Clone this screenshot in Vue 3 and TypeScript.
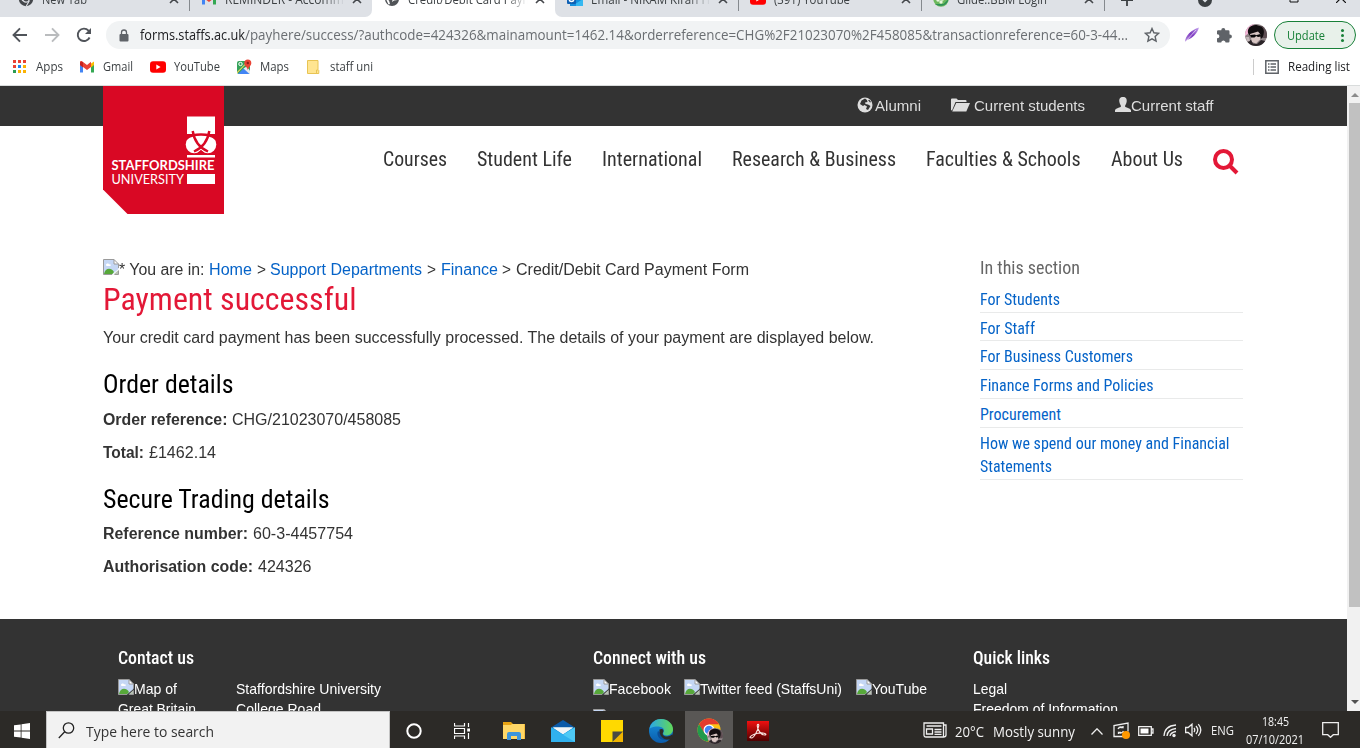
<script setup lang="ts">
interface Tab { title: string; width: number; icon: string; active?: boolean; divider?: boolean; faded?: boolean }
interface Label { text: string; width: number }

const tabs: Tab[] = [
  { title: 'New Tab', width: 45, icon: 'i-chromegray', divider: true },
  { title: 'REMINDER - Accommo', width: 126, icon: 'i-gmail', faded: true },
  { title: 'Credit/Debit Card Paym', width: 125, icon: 'i-globe', active: true, faded: true },
  { title: 'Email - NIKAM Kiran H', width: 119, icon: 'i-outlook', divider: true, faded: true },
  { title: '(391) YouTube', width: 76, icon: 'i-youtube', divider: true },
  { title: 'Glide::BBM Login', width: 90, icon: 'i-glide', divider: true },
]

const bookmarks: (Label & { icon: string; cls: string })[] = [
  { text: 'Apps', width: 27, icon: 'i-apps', cls: 'b-apps' },
  { text: 'Gmail', width: 30, icon: 'i-gmail', cls: 'b-gmail' },
  { text: 'YouTube', width: 46, icon: 'i-youtube', cls: 'b-youtube' },
  { text: 'Maps', width: 29, icon: 'i-maps', cls: 'b-maps' },
  { text: 'staff uni', width: 43, icon: 'i-folder', cls: 'b-folder' },
]

const nav: Label[] = [
  { text: 'Courses', width: 64 },
  { text: 'Student Life', width: 95 },
  { text: 'International', width: 100 },
  { text: 'Research & Business', width: 164 },
  { text: 'Faculties & Schools', width: 154.5 },
  { text: 'About Us', width: 72 },
]

const section: Label[][] = [
  [{ text: 'For Students', width: 80 }],
  [{ text: 'For Staff', width: 55 }],
  [{ text: 'For Business Customers', width: 153 }],
  [{ text: 'Finance Forms and Policies', width: 173.5 }],
  [{ text: 'Procurement', width: 81 }],
  [{ text: 'How we spend our money and Financial', width: 249.5 }, { text: 'Statements', width: 72 }],
]

const social: Label[] = [
  { text: 'Facebook', width: 62 },
  { text: 'Twitter feed (StaffsUni)', width: 142 },
  { text: 'YouTube', width: 55 },
]

// Condenses or widens a text run so that it occupies the given width in px.
const vFit = {
  mounted(el: HTMLElement, binding: { value: number }) {
    const natural = el.getBoundingClientRect().width
    if (!natural) return
    el.style.transform = `scaleX(${binding.value / natural})`
    el.style.marginRight = `${binding.value - natural}px`
  },
}
</script>

<template>
  <div class="screen">
    <svg class="defs" width="0" height="0">
      <defs>
        <linearGradient id="edgeA" x1="0" y1="0" x2="1" y2="0"><stop offset="0" stop-color="#2aa7e8" /><stop offset="1" stop-color="#62d957" /></linearGradient>
        <linearGradient id="edgeB" x1="0" y1="0" x2="0" y2="1"><stop offset="0" stop-color="#1793de" /><stop offset="1" stop-color="#0b5cab" /></linearGradient>
        <linearGradient id="pdf" x1="0" y1="0" x2="0" y2="1"><stop offset="0" stop-color="#f01010" /><stop offset="1" stop-color="#4e0000" /></linearGradient>
        <linearGradient id="quill" x1="0" y1="1" x2="1" y2="0"><stop offset="0" stop-color="#b48be0" /><stop offset=".5" stop-color="#7d3bc0" /><stop offset="1" stop-color="#c9aaf0" /></linearGradient>
        <clipPath id="round"><circle cx="11" cy="11" r="11" /></clipPath>
      </defs>
      <symbol id="i-broken" viewBox="0 0 16 16">
        <path d="M.5.5H11l4.500 4.500v5L9 15.500H.5z" fill="#c5d7f5" />
        <path d="M3 6c0-2 3-2 3-.5C8 4.500 8.500 7 7 7H3.500z" fill="#fff" />
        <path d="M1 15c1-6 7-7 10-2l-2 2.500H1z" fill="#57a83a" />
        <path d="M15.500 11v4.500h-5z" fill="#b7c3b4" />
        <path d="M11 .5v4.500h4.500z" fill="#fff" />
        <path d="M9 15.500H.5V.5H11l4.500 4.500v4M11 .5v4.500h4.500M15.500 11.500v4h-4" fill="none" stroke="#9a9a9a" />
      </symbol>
      <symbol id="i-chromegray" viewBox="0 0 16 16"><circle cx="8" cy="8" r="7.200" fill="#44474b" /><circle cx="8" cy="8" r="3.200" fill="#44474b" stroke="#dee1e6" stroke-width="1.200" /><path d="M8 4.300h6.500M4.800 10 1.500 4.500M11.200 10 8 15.500" stroke="#dee1e6" stroke-width="1.100" /></symbol>
      <symbol id="i-gmail" viewBox="0 0 16 16"><path d="M1 3v10.500h3V7z" fill="#4285f4" /><path d="M15 3v10.500h-3V7z" fill="#34a853" /><path d="M12 4.500 15 2.600V6l-3 2.500z" fill="#fbbc04" /><path d="M1 6V3.200C1 2 2.500 1.800 3.400 2.500L8 6l4-3.200v5.200l-4 3-4-3V8.500z" fill="#ea4335" /><path d="M1 3.200V6l3 2.300V3z" fill="#c5221f" /></symbol>
      <symbol id="i-youtube" viewBox="0 0 16 16"><rect y="2.200" width="16" height="11.600" rx="3" fill="#f00" /><path d="M6.300 5.500v5L10.600 8z" fill="#fff" /></symbol>
      <symbol id="i-globe" viewBox="0 0 16 16"><circle cx="8" cy="8" r="7" fill="#505357" /><path d="M7 1.500 4.500 4.800 7 6.200 5.500 8.500 8.500 9l-.5 2 2-1.500 3.500-.5-1-2.500L9.500 6l2-2.500M2 8l3 1.500 1 3.500-1.500.5z" fill="#fff" /></symbol>
      <symbol id="i-outlook" viewBox="0 0 16 16"><path d="M4 1h11v8H4z" fill="#28a8ea" /><path d="M3 8h13v7H3z" fill="#1490df" /><path d="m16 8-7 4.500V15h7z" fill="#50d9ff" opacity=".55" /><rect y="3.500" width="9" height="9.500" rx="1" fill="#0f61b4" /><circle cx="4.500" cy="8.200" r="2.300" fill="none" stroke="#fff" stroke-width="1.400" /></symbol>
      <symbol id="i-glide" viewBox="0 0 16 16"><circle cx="8" cy="8" r="7.700" fill="#6cb85c" /><path d="M2 13c4 3 12 3 13.500-5l-5 5z" fill="#2e9057" /><g fill="#e9f5df"><circle cx="5" cy="9" r="1.700" /><circle cx="8" cy="11" r="1.700" /><circle cx="9.500" cy="8" r="1.700" /><circle cx="6.500" cy="6" r="1.700" /></g></symbol>
      <symbol id="i-apps" viewBox="0 0 14 14"><path d="M0 0h3v3H0zM5 0h3v3H5zM10 0h3v3h-3zM0 5h3v3H0z" fill="#ea4335" /><path d="M5 5h3v3H5z" fill="#1a83f0" /><path d="M10 5h3v3h-3zM5 10h3v3H5zM10 10h3v3h-3z" fill="#fbb304" /><path d="M0 10h3v3H0z" fill="#2b9c52" /></symbol>
      <symbol id="i-maps" viewBox="0 0 16 16"><rect x="1" y="2" width="13" height="13" rx="2" fill="#35a35a" /><path d="M2 15 8 9l6 6z" fill="#4285f4" /><path d="m1 13 10-10h1L1 14.500z" fill="#fdd663" /><path d="m7.500 9.500 6 5.500.5-.5v-3l-3.500-4z" fill="#e8eaed" /><circle cx="4.500" cy="5" r="1.700" fill="none" stroke="#fff" /><path d="M8.300 4a3.500 3.500 0 0 1 7 0c0 2.500-2.500 3.500-3.500 7-1-3.500-3.500-4.500-3.500-7z" fill="#ea4335" /><circle cx="11.800" cy="4" r="1.200" fill="#8c1d18" /></symbol>
      <symbol id="i-folder" viewBox="0 0 16 16"><path d="M1.500 1.500h10.500v9l.8 1v3H1.500z" fill="#ffe591" stroke="#e8c453" /><path d="M10.500 14V11h1.500" fill="none" stroke="#e8c453" /></symbol>
      <symbol id="i-face" viewBox="0 0 22 22"><g clip-path="url(#round)"><path fill="#8e8386" d="M0 0h22v22H0z" /><path d="M0 0h9L4 9 0 12z" fill="#f2b6d6" /><path d="M16 2h6v12h-6z" fill="#5d4d52" /><path d="M3 9C2 3 8 0 13 1.500c6 .5 7 6 5 11L16 15l-2-6-8 1-1 2z" fill="#120e10" /><path d="m5 10 8-2.500 2.500 3-.5 5-4 4-4-1.500z" fill="#d8c6c3" /><path d="m5 11 5-.5 1 .7 4.500-1.200.5 2.500-3 .5-1.800-1-1.700 1.500H6z" fill="#070607" /><path d="m0 22 2-5 4-1 2 3.500 4 .5 4-4 4 1 1 5z" fill="#2b2528" /><path d="M1 13h3l1 4-3 1z" fill="#c3b7ba" /></g></symbol>
    </svg>

    <header class="browser">
      <div class="tabstrip">
        <div v-for="t in tabs" :key="t.title" class="tab" :class="{ active: t.active, divider: t.divider }">
          <svg class="favicon"><use :href="'#' + t.icon" /></svg>
          <div class="tabtitle" :class="{ faded: t.faded }"><span v-fit="t.width" class="fit">{{ t.title }}</span></div>
          <svg class="close" viewBox="0 0 10 10"><path d="m1 1 8 8M9 1 1 9" /></svg>
        </div>
        <svg class="plus" viewBox="0 0 14 14"><path d="M7 1v12M1 7h12" /></svg>
        <svg class="media" viewBox="0 0 14 14"><circle cx="7" cy="7" r="7" /><path d="M4.500 7h5L7 9.500z" fill="#dee1e6" /></svg>
        <svg class="maxi" viewBox="0 0 10 10"><path d="M1 1h8v8H1z" /></svg>
        <svg class="quit" viewBox="0 0 10 10"><path d="m0 0 10 10M10 0 0 10" /></svg>
      </div>

      <div class="toolbar">
        <svg class="tool back" viewBox="0 0 16 16"><path d="M15 8H2M8 1.300 1.500 8 8 14.700" /></svg>
        <svg class="tool forward" viewBox="0 0 16 16"><path d="M1 8h13M8 1.300 14.500 8 8 14.700" /></svg>
        <svg class="tool reload" viewBox="0 0 16 16"><path d="M13.600 10.500A6.200 6.200 0 1 1 12.500 3.600l1 1" /><path class="solid" d="M15 1v6H9z" /></svg>
        <div class="omnibox">
          <svg class="lock" viewBox="0 0 10 13"><path d="M2.500 5.500V3.500a2.500 2.500 0 0 1 5 0v2" fill="none" stroke="#5f6368" stroke-width="1.300" /><rect x=".5" y="5" width="9" height="7.500" rx="1" fill="#5f6368" /></svg>
          <span v-fit="105" class="fit host">forms.staffs.ac.uk</span><span v-fit="883" class="fit path">/payhere/success/?authcode=424326&amp;mainamount=1462.14&amp;orderreference=CHG%2F21023070%2F458085&amp;transactionreference=60-3-44...</span>
          <svg class="star" viewBox="0 0 16 16"><path d="m8 1.500 1.900 4.300 4.700.5-3.500 3.200 1 4.700L8 11.800l-4.100 2.400 1-4.700L1.400 6.300l4.700-.5z" /></svg>
        </div>
        <svg class="quill" viewBox="0 0 16 16"><path d="M1 15C1.500 8.500 7 3 15 .5 13.500 6 9 11 3.500 12.800z" fill="url(#quill)" /><path d="M1 15 12 3" stroke="#f3eafa" stroke-width=".7" /></svg>
        <svg class="puzzle" viewBox="0 0 16 16"><path d="M1 4.500q0-1.200 1.200-1.200h3.100V3a2 2 0 0 1 4 0v.3h3q1.200 0 1.200 1.200v3h.4a2 2 0 0 1 0 4h-.4v2.800q0 1.200-1.200 1.200H9.500V15a2.200 2.200 0 0 0-4.200 0v.5H2.200Q1 15.500 1 14.300v-3h.4a2 2 0 0 0 0-4H1z" fill="#5f6368" /></svg>
        <svg class="avatar"><use href="#i-face" /></svg>
        <div class="update"><span v-fit="38" class="fit">Update</span><i class="dots" /></div>
      </div>

      <div class="bookmarks">
        <div v-for="b in bookmarks" :key="b.text" class="bookmark" :class="b.cls">
          <svg><use :href="'#' + b.icon" /></svg><span v-fit="b.width" class="fit">{{ b.text }}</span>
        </div>
        <div class="reading">
          <svg viewBox="0 0 14 14"><path d="M.8.8h12.400v12.400H.8z" fill="none" stroke="#5f6368" stroke-width="1.500" /><path d="M3 4h1.500M5.500 4H11M3 7h1.500M5.500 7H11M3 10h1.500M5.500 10H11" stroke="#5f6368" stroke-width="1.500" /></svg>
          <span v-fit="62" class="fit">Reading list</span>
        </div>
      </div>
    </header>

    <div class="viewport">
      <div class="page">
        <div class="topbar">
          <a class="alumni"><svg viewBox="0 0 16 16"><circle cx="8" cy="8" r="7.500" fill="#ddd" /><path d="M8 1.500 4.500 3.500 3 7l3 2 1.500-1L10 9.500 9 12l2 1 2.500-4L11 7.500 8.500 7 8 5.500l2.500-.5L10 3zM11 3l2 2.500 1-.5-1.500-2z" fill="#333" /></svg><span v-fit="46" class="fit">Alumni</span></a>
          <a class="students"><svg viewBox="0 0 19 14"><path d="M0 12V1.500Q0 .5 1 .5h4.500L7 2h7.500q1 0 1 1v1H4.500L1 12.500z" fill="#ddd" /><path d="M5.200 5H19l-3.700 8.500H1.200z" fill="#ddd" /></svg><span v-fit="111" class="fit">Current students</span></a>
          <a class="staff"><svg viewBox="0 0 16 15"><path d="M8 0c3 0 4 2 3.700 4.500C11.400 7.500 10 8 10 9.200c0 1.500 6 1.800 6 4.300V15H0v-1.500c0-2.500 6-2.800 6-4.300C6 8 4.600 7.500 4.300 4.500 4 2 5 0 8 0z" fill="#ddd" /></svg><span v-fit="82.500" class="fit">Current staff</span></a>
        </div>
        <nav class="nav">
          <a v-for="n in nav" :key="n.text"><span v-fit="n.width" class="fit">{{ n.text }}</span></a>
          <svg class="search" viewBox="0 0 26 26"><circle cx="10.500" cy="10.500" r="8.500" /><path d="m17 17 7 7" /></svg>
        </nav>

        <svg class="logo" viewBox="0 0 121 128">
          <path d="M0 0h121v128H24.500L0 103.500z" fill="#d90824" />
          <path d="M84 30.500h28V48H84zM84 69h28v2.500H84zM84 88h28v10H84z" fill="#fff" />
          <ellipse cx="91.300" cy="58.500" rx="8.600" ry="8.700" fill="#fff" />
          <ellipse cx="104.700" cy="58.500" rx="8.600" ry="8.700" fill="#fff" />
          <path d="M90 49h16v13H90z" fill="#fff" />
          <path d="M83.500 52.500Q88 48.500 98 48.500T112.500 52.500" fill="none" stroke="#d90824" stroke-width="2.400" />
          <path d="M89.700 45C91 54 95 61 105 65.500M106.300 45C105 54 101 61 91 65.500" fill="none" stroke="#d90824" stroke-width="2.400" />
          <path d="m93 68 5-4 5 4z" fill="#d90824" />
          <g fill="#fff" font-family="Lato, sans-serif" font-size="13"><text x="8.500" y="83.700" font-weight="700" textLength="103" lengthAdjust="spacingAndGlyphs">STAFFORDSHIRE</text><text x="8.500" y="97.700" textLength="72.500" lengthAdjust="spacingAndGlyphs">UNIVERSITY</text></g>
        </svg>

        <div class="content">
          <main>
            <div class="crumbs"><svg class="broken"><use href="#i-broken" /></svg><span v-fit="85.500" class="fit">* You are in:</span><a v-fit="43" class="fit">Home</a><span v-fit="9" class="fit">&gt;</span><a v-fit="152" class="fit">Support Departments</a><span v-fit="9" class="fit">&gt;</span><a v-fit="57" class="fit">Finance</a><span v-fit="9" class="fit">&gt;</span><span v-fit="233" class="fit">Credit/Debit Card Payment Form</span></div>
            <h1><span v-fit="253.500" class="fit">Payment successful</span></h1>
            <p class="intro"><span v-fit="771" class="fit">Your credit card payment has been successfully processed. The details of your payment are displayed below.</span></p>
            <h2><span v-fit="130.500" class="fit">Order details</span></h2>
            <p class="first"><b v-fit="124.500" class="fit">Order reference:</b><span v-fit="169" class="fit value">CHG/21023070/458085</span></p>
            <p><b v-fit="41" class="fit">Total:</b><span v-fit="67" class="fit value">£1462.14</span></p>
            <h2><span v-fit="226.500" class="fit">Secure Trading details</span></h2>
            <p class="second"><b v-fit="145" class="fit">Reference number:</b><span v-fit="100" class="fit value">60-3-4457754</span></p>
            <p><b v-fit="150" class="fit">Authorisation code:</b><span v-fit="53.500" class="fit value">424326</span></p>
          </main>
          <aside>
            <h3><span v-fit="100" class="fit">In this section</span></h3>
            <ul>
              <li v-for="(item, i) in section" :key="i"><div v-for="l in item" :key="l.text"><a v-fit="l.width" class="fit">{{ l.text }}</a></div></li>
            </ul>
          </aside>
        </div>

        <footer>
          <section class="contact">
            <h4><span v-fit="76" class="fit">Contact us</span></h4>
            <div class="columns">
              <div class="map"><div class="line"><svg class="broken"><use href="#i-broken" /></svg><span v-fit="43" class="fit">Map of</span></div><div class="line"><span v-fit="78" class="fit">Great Britain</span></div></div>
              <div><div class="line"><span v-fit="145" class="fit">Staffordshire University</span></div><div class="line"><span v-fit="85" class="fit">College Road</span></div></div>
            </div>
          </section>
          <section class="connect">
            <h4><span v-fit="113" class="fit">Connect with us</span></h4>
            <div class="line social"><a v-for="s in social" :key="s.text"><svg class="broken"><use href="#i-broken" /></svg><span v-fit="s.width" class="fit">{{ s.text }}</span></a></div>
            <div class="line next"><svg class="broken"><use href="#i-broken" /></svg></div>
          </section>
          <section class="quick">
            <h4><span v-fit="77" class="fit">Quick links</span></h4>
            <div class="line"><span v-fit="34" class="fit">Legal</span></div>
            <div class="line"><span v-fit="145" class="fit">Freedom of Information</span></div>
          </section>
        </footer>
      </div>
      <div class="scrollbar"><i class="up" /><div class="thumb" /><i class="down" /></div>
    </div>

    <div class="taskbar">
      <div class="start"><svg viewBox="0 0 16 16"><path d="M0 2.300 6.700 1.400v6.200H0zM7.500 1.300 16 0v7.600H7.500zM0 8.400h6.700v6.200L0 13.700zM7.500 8.400H16V16l-8.500-1.300z" fill="#fff" /></svg></div>
      <div class="searchbox"><svg viewBox="0 0 17 17"><circle cx="10.500" cy="6" r="5.200" /><path d="M6.700 9.800 .8 16" /></svg><span v-fit="128" class="fit">Type here to search</span></div>
      <div class="apps">
        <div class="app"><svg width="16" height="16" viewBox="0 0 16 16"><circle cx="8" cy="8" r="6.700" fill="none" stroke="#fff" stroke-width="2" /></svg></div>
        <div class="app"><svg width="16" height="16" viewBox="0 0 16 16"><path d="M.5 0v3h10V0M.5 16v-3h10v3M.5 5.500h10v5H.5zM14.500 0v4M14.500 10v6" fill="none" stroke="#fff" stroke-width="1.200" /><path d="M13.200 5.500H16v3h-2.800z" fill="#fff" /></svg></div>
        <div class="app explorer"><svg width="22" height="18" viewBox="0 0 22 18"><path d="M0 0h8l2 2h12v15H0z" fill="#e8a313" /><path d="M0 3h8l1-1h12.500v15H0z" fill="#ffd767" /><path d="M4 18v-6q0-2 2-2h10q2 0 2 2v6h-4v-4H8v4z" fill="#3d95db" /></svg></div>
        <div class="app"><svg width="24" height="22" viewBox="0 0 24 22"><path d="M0 7.500 12 0l12 7.500z" fill="#0b5aa8" /><path d="M0 7.500h24V22H0z" fill="#1e9be2" /><path d="M2 7.500h20L12 14z" fill="#f2f5f7" /><path d="m0 7.500 12 7.200L24 7.500V22H0z" fill="#30b1ee" /><path d="M2 7.500h20l-10 6.700z" fill="#f2f5f7" /><path d="m12 14.700 12-7.200V22z" fill="#4ec9f5" /></svg></div>
        <div class="app"><svg width="22" height="22" viewBox="0 0 22 22"><path d="M0 0h22v22H0z" fill="#ffd900" /><path d="M12 22 22 11v11z" fill="#f0b400" /><path d="M11.500 11.500H22L11.500 22z" fill="#4a4a43" /></svg></div>
        <div class="app"><svg width="24" height="24" viewBox="0 0 24 24"><circle cx="12" cy="12" r="12" fill="url(#edgeB)" /><path d="M.3 10C2 3 7 0 12 0c7 0 12 5 12 10 0 4-3 6.500-6.500 6.500-3 0-4-1.500-3-3 2-4-2-6-6-6C4 7.500 1 9 .3 10z" fill="url(#edgeA)" /><path d="M9 12c-2 4 1 9 7 9 3 0 4-.8 6-2l1-2c-4 3-9 1.500-9.500-1.500z" fill="#0b4e98" /><path d="M10.500 10.500c3-1.500 5 .5 3.500 3-1 2 .5 4 4 4 2 0 3.500-.8 5-2l.8 1.500L22 20c-5 2-12-1-11.500-9.500z" fill="#2c2a27" /></svg></div>
        <div class="app current"><svg width="28" height="26" viewBox="0 0 28 26"><circle cx="12" cy="12" r="11.500" fill="#fbc116" /><path d="M2 6.200A11.500 11.500 0 0 1 22 6.200H12L7 15z" fill="#e33b2e" /><path d="M2 6.200 7.500 15l6 2.500-3 6A11.500 11.500 0 0 1 2 6.200z" fill="#229a4c" /><circle cx="12" cy="12" r="5.500" fill="#fff" /><circle cx="12" cy="12" r="4.300" fill="#4285f4" /><use href="#i-face" x="10" y="10" width="16" height="16" /></svg></div>
        <div class="app"><svg width="22" height="20" viewBox="0 0 22 20"><path d="M0 0h22v20H0z" fill="url(#pdf)" /><path d="M3 16.500c0-1.500 7-5.500 13-4.500 3 .5 4 2 1.500 2C14 14 10 8 10.300 4.500c.2-2 1.700-1.500 1.400.5C11 9 7 17 4.500 17z" fill="none" stroke="#f8e5e1" stroke-width="1.100" /></svg></div>
      </div>
      <div class="tray">
        <svg class="news" viewBox="0 0 24 16"><path d="M1 1h19.500v14H3q-2 0-2-2zM20.500 3H23v10q0 2-2.500 2" /><path d="M3.500 4h15M3.500 7h6v5h-6zM11.500 7.500h7M11.500 10h7M11.500 12.300h7" /></svg>
        <span v-fit="29" class="fit temp">20°C</span><span v-fit="82" class="fit sky">Mostly sunny</span>
        <svg class="chev" viewBox="0 0 12 7"><path d="m.5 6.500 5.500-5.700 5.500 5.700" /></svg>
        <svg class="sync" viewBox="0 0 17 17"><path d="M10 14.500H1V3.500L15 1v8.500M5 7q1.500-3 5-1.500V4M10 5.500H7.500M10.500 9q-1.500 3-5 1.500V12M5.500 10.500H8" /><circle cx="13" cy="13" r="4" fill="#ff9800" stroke="none" /></svg>
        <svg class="battery" viewBox="0 0 16 10"><path d="M.7.7h12.600v8.600H.7zM13.500 3H15v4h-1.500" /><path d="M2.500 2.500h8v5h-8z" fill="#fff" stroke="none" /></svg>
        <svg class="wifi" viewBox="0 0 14 14"><path d="M1 12Q1.500 2 13 1M4 12q.5-6.500 9-7.500M7 12q.5-3.500 6-4.500" /><circle cx="11" cy="11.500" r="1.700" fill="#eee" stroke="none" /></svg>
        <svg class="volume" viewBox="0 0 17 14"><path d="M.6 4.500h2.500L7 1.200v11.600L3.100 9.500H.6zM9 5q1.500 2 0 4M11 3q3.500 4 0 8M13.300 1.200q5 5.800 0 11.600" /></svg>
        <span v-fit="23" class="fit lang">ENG</span>
        <div class="clock"><div><span v-fit="27" class="fit">18:45</span></div><div><span v-fit="58" class="fit">07/10/2021</span></div></div>
        <svg class="notice" viewBox="0 0 17 16"><path d="M.7.700h15.600v12h-5l-2.800 2.600-2.800-2.600h-5z" /></svg>
      </div>
    </div>
  </div>
</template>

<style>
html, body { margin: 0; overflow: hidden; }
</style>

<style scoped>
.screen { width: 1360px; height: 748px; display: flex; flex-direction: column; overflow: hidden; background: #fff; font-family: "Liberation Sans", Arial, sans-serif; }
.defs { position: absolute; }
svg { display: block; flex: none; }
h1, h2, h3, h4, p, ul { margin: 0; padding: 0; font-weight: 400; }
li { list-style: none; }
a { color: inherit; }
.fit { display: inline-block; flex: none; white-space: pre; transform-origin: 0 50%; }

.browser { height: 85px; flex: none; border-bottom: 1px solid #d9dcdc; font-family: "Open Sans", "Noto Sans", sans-serif; color: #3c4043; font-size: 12px; }
.tabstrip { height: 17px; padding-left: 6px; display: flex; overflow: hidden; background: linear-gradient(90deg, #dee1e6 364px, #fff 364px 564px, #dee1e6 564px); }
.tab { width: 183px; height: 17px; flex: none; display: flex; align-items: flex-start; background: #dee1e6; box-sizing: border-box; position: relative; }
.tab:nth-child(2) { border-bottom-right-radius: 7px; }
.tab:nth-child(4) { border-bottom-left-radius: 7px; }
.tab.active { background: #fff; }
.tab.divider::after { content: ""; position: absolute; right: -1px; top: 0; width: 1px; height: 11px; background: #85898e; z-index: 1; }
.favicon { width: 16px; height: 16px; margin: -9px 0 0 12px; }
.tabtitle { width: 127px; height: 18px; line-height: 18px; margin: -9px 0 0 8px; overflow: hidden; white-space: nowrap; }
.tabtitle.faded { width: 122px; margin-right: 5px; mask-image: linear-gradient(90deg, #000 80%, transparent 98%); }
.close { width: 10px; height: 10px; margin: -6px 0 0 0; fill: none; stroke: #45484c; stroke-width: 1.600; }
.plus { width: 14px; height: 14px; margin: -7px 0 0 16px; fill: none; stroke: #3c4043; stroke-width: 1.800; }
.media { width: 14px; height: 14px; margin: -7px 0 0 64px; fill: #3c4043; }
.maxi { width: 10px; height: 10px; margin: -7px 0 0 77px; fill: none; stroke: #111; }
.quit { width: 10px; height: 10px; margin: -7px 0 0 37px; fill: none; stroke: #111; stroke-width: 1.200; }

.toolbar { height: 36px; display: flex; align-items: center; background: #fff; }
.tool { width: 16px; height: 16px; fill: none; stroke: #50545a; stroke-width: 1.900; }
.tool .solid { fill: #50545a; stroke: none; }
.back { margin-left: 12px; }
.forward { margin-left: 16px; stroke: #babcbe; }
.reload { margin-left: 16px; }
.omnibox { width: 1064px; height: 28px; margin-left: 14px; flex: none; border-radius: 14px; background: #f1f3f4; display: flex; align-items: center; font-size: 14px; line-height: 28px; box-sizing: border-box; padding-left: 13px; }
.lock { width: 10px; height: 13px; margin-right: 11px; }
.host { color: #202124; }
.path { color: #6a6e72; }
.star { width: 16px; height: 16px; margin-left: 16px; fill: none; stroke: #5f6368; stroke-width: 1.400; }
.quill { width: 16px; height: 16px; margin-left: 14px; }
.puzzle { width: 16px; height: 16px; margin-left: 16px; }
.avatar { width: 22px; height: 22px; margin-left: 13px; }
.update { width: 82px; height: 28px; margin-left: 7px; box-sizing: border-box; border: 1px solid #188038; border-radius: 14px; background: #e8f1ea; color: #188038; display: flex; align-items: center; padding-left: 12px; }
.dots { width: 3px; height: 3px; border-radius: 50%; margin-left: 16px; background: #188038; box-shadow: 0 -5px #188038, 0 5px #188038; }

.bookmarks { height: 28px; display: flex; align-items: center; }
.bookmark { display: flex; align-items: center; height: 28px; line-height: 28px; }
.bookmark svg { width: 16px; height: 16px; }
.b-apps svg { width: 14px; height: 14px; margin: 0 9px 0 13px; }
.b-gmail svg { margin: 0 8px 0 16px; }
.b-youtube svg { margin: 0 8px 0 17px; }
.b-maps svg { margin: 0 8px 0 16px; }
.b-folder svg { margin: 0 8px 0 17px; }
.reading { margin: 0 10px 0 auto; height: 16px; border-left: 1px solid #ccc; padding-left: 11px; display: flex; align-items: center; color: #202124; line-height: 16px; }
.reading svg { width: 14px; height: 14px; margin-right: 9px; }

.viewport { height: 625px; flex: none; display: flex; overflow: hidden; }
.page { width: 1347px; height: 625px; position: relative; overflow: hidden; color: #333; font-size: 16px; }
.topbar { height: 40px; background: #333; display: flex; align-items: center; color: #ddd; padding-left: 858px; font-size: 15px; }
.topbar a { display: flex; align-items: center; margin-top: -2px; }
.alumni svg { width: 16px; height: 16px; margin: -1px 2px 0 -1px; }
.students svg { width: 19px; height: 14px; margin: 0 4px 0 30px; }
.staff svg { width: 16px; height: 15px; margin: -1px -.5px 0 30px; }
.nav { height: 65px; display: flex; align-items: center; gap: 30px; padding-left: 383px; font: 20px/30px "Roboto Condensed", Roboto, sans-serif; }
.nav a { display: flex; }
.search { width: 26px; height: 26px; margin-top: 6px; fill: none; stroke: #e31837; stroke-width: 4; }
.logo { position: absolute; left: 103px; top: 0; width: 121px; height: 128px; }

.content { display: flex; height: 428px; padding-left: 103px; }
main { width: 877px; flex: none; padding-top: 69px; box-sizing: border-box; }
.crumbs { height: 20px; display: flex; align-items: center; line-height: 20px; gap: 4.650px; }
.broken { width: 16px; height: 16px; }
.crumbs .broken { margin: -6px -4.650px 0 0; }
.crumbs a, aside a { color: #0563c8; }
h1 { height: 40px; font: 31px/40px "Roboto Condensed", Roboto, sans-serif; color: #e31837; }
h2 { height: 30px; margin-top: 22px; font: 25px/30px "Roboto Condensed", Roboto, sans-serif; color: #000; }
p { height: 20px; line-height: 20px; margin-top: 13px; display: flex; }
.intro { margin-top: 8px; }
.first { margin-top: 10px; }
.second { margin-top: 9px; }
.value { margin-left: 4.600px; }
aside { width: 263px; padding-top: 65px; font: 16px/23px "Roboto Condensed", Roboto, sans-serif; }
h3 { font-size: 18px; line-height: 24px; height: 28px; color: #666; }
li { border-bottom: 1px solid #e9eaea; padding: 3.750px 0 1px; }
li:nth-child(2) { padding-bottom: .5px; }
li:nth-child(3) { padding-top: 4.250px; }
li div { height: 23px; display: flex; }

footer { height: 92px; background: #333; color: #fff; display: flex; box-sizing: border-box; padding: 27px 0 0 117.500px; font-size: 14.500px; }
h4 { height: 24px; font: 500 18px/24px "Roboto Condensed", Roboto, sans-serif; margin-bottom: 9px; }
.contact { width: 475px; flex: none; }
.connect { width: 380px; flex: none; }
.columns { display: flex; }
.map { width: 118px; }
.line { height: 20px; line-height: 20px; display: flex; align-items: center; }
.line .broken { margin-top: -4px; }
.social { gap: 13.500px; }
.social a { display: flex; align-items: center; }
.next .broken { margin-top: 16px; }

.scrollbar { width: 13px; flex: none; background: #f1f1f1; display: flex; flex-direction: column; align-items: center; }
.up, .down { width: 0; height: 0; border: 4px solid transparent; }
.up { margin: 3px 0 6px 3px; border-bottom-color: #8b8b8b; border-top-width: 0; border-bottom-width: 4px; padding-top: 4px; }
.down { border-top-color: #505050; margin: auto 0 7px 3px; border-bottom-width: 0; }
.thumb { width: 11px; height: 504px; margin-left: 2px; background: #c1c1c1; }

.taskbar { height: 37px; flex: none; display: flex; background: #2c2a27; font-family: "Open Sans", "Noto Sans", sans-serif; color: #f2f2f2; }
.start { width: 46px; display: flex; align-items: center; justify-content: center; padding-top: 2px; box-sizing: border-box; }
.start svg { width: 16px; height: 16px; margin-left: -2px; }
.searchbox { width: 344px; box-sizing: border-box; border: 1px solid #c4c4c4; border-bottom: 0; background: #f2f2f2; color: #333; display: flex; align-items: center; font-size: 14.500px; line-height: 37px; padding: 2px 0 0 11px; }
.searchbox svg { width: 17px; height: 17px; fill: none; stroke: #222; stroke-width: 1.300; margin: -1px 11px 0 0; }
.apps { display: flex; width: 390px; }
.app { width: 48px; margin-right: 1px; flex: none; display: flex; align-items: center; justify-content: center; padding-top: 2px; box-sizing: border-box; }
.app:first-child { margin-right: 0; }
.explorer { margin-left: 3px; }
.current { background: #595755; margin-left: -1px; }
.current svg { margin-left: 4px; }
.tray { display: flex; align-items: center; margin-left: 143px; padding-top: 3px; font-size: 14px; }
.tray svg { fill: none; stroke: #eee; stroke-width: 1.300; }
.news { width: 24px; height: 16px; margin-top: -2px; }
.temp { margin-left: 8px; }
.sky { margin-left: 9px; }
.chev { width: 12px; height: 7px; margin-left: 16px; }
.sync { width: 17px; height: 17px; margin: -2px 0 0 10px; }
.battery { width: 16px; height: 10px; margin: 0 0 0 8px; }
.wifi { width: 14px; height: 14px; margin-left: 9px; }
.volume { width: 17px; height: 14px; margin: -2px 0 0 8px; }
.lang { margin: -2px 0 0 9px; font-size: 12px; }
.clock { width: 58px; margin-left: 12px; margin-top: -1px; text-align: center; font-size: 12px; line-height: 18px; }
.clock div { height: 18px; display: flex; justify-content: center; }
.notice { width: 17px; height: 16px; margin-left: 18px; margin-top: -2px; }
</style>
